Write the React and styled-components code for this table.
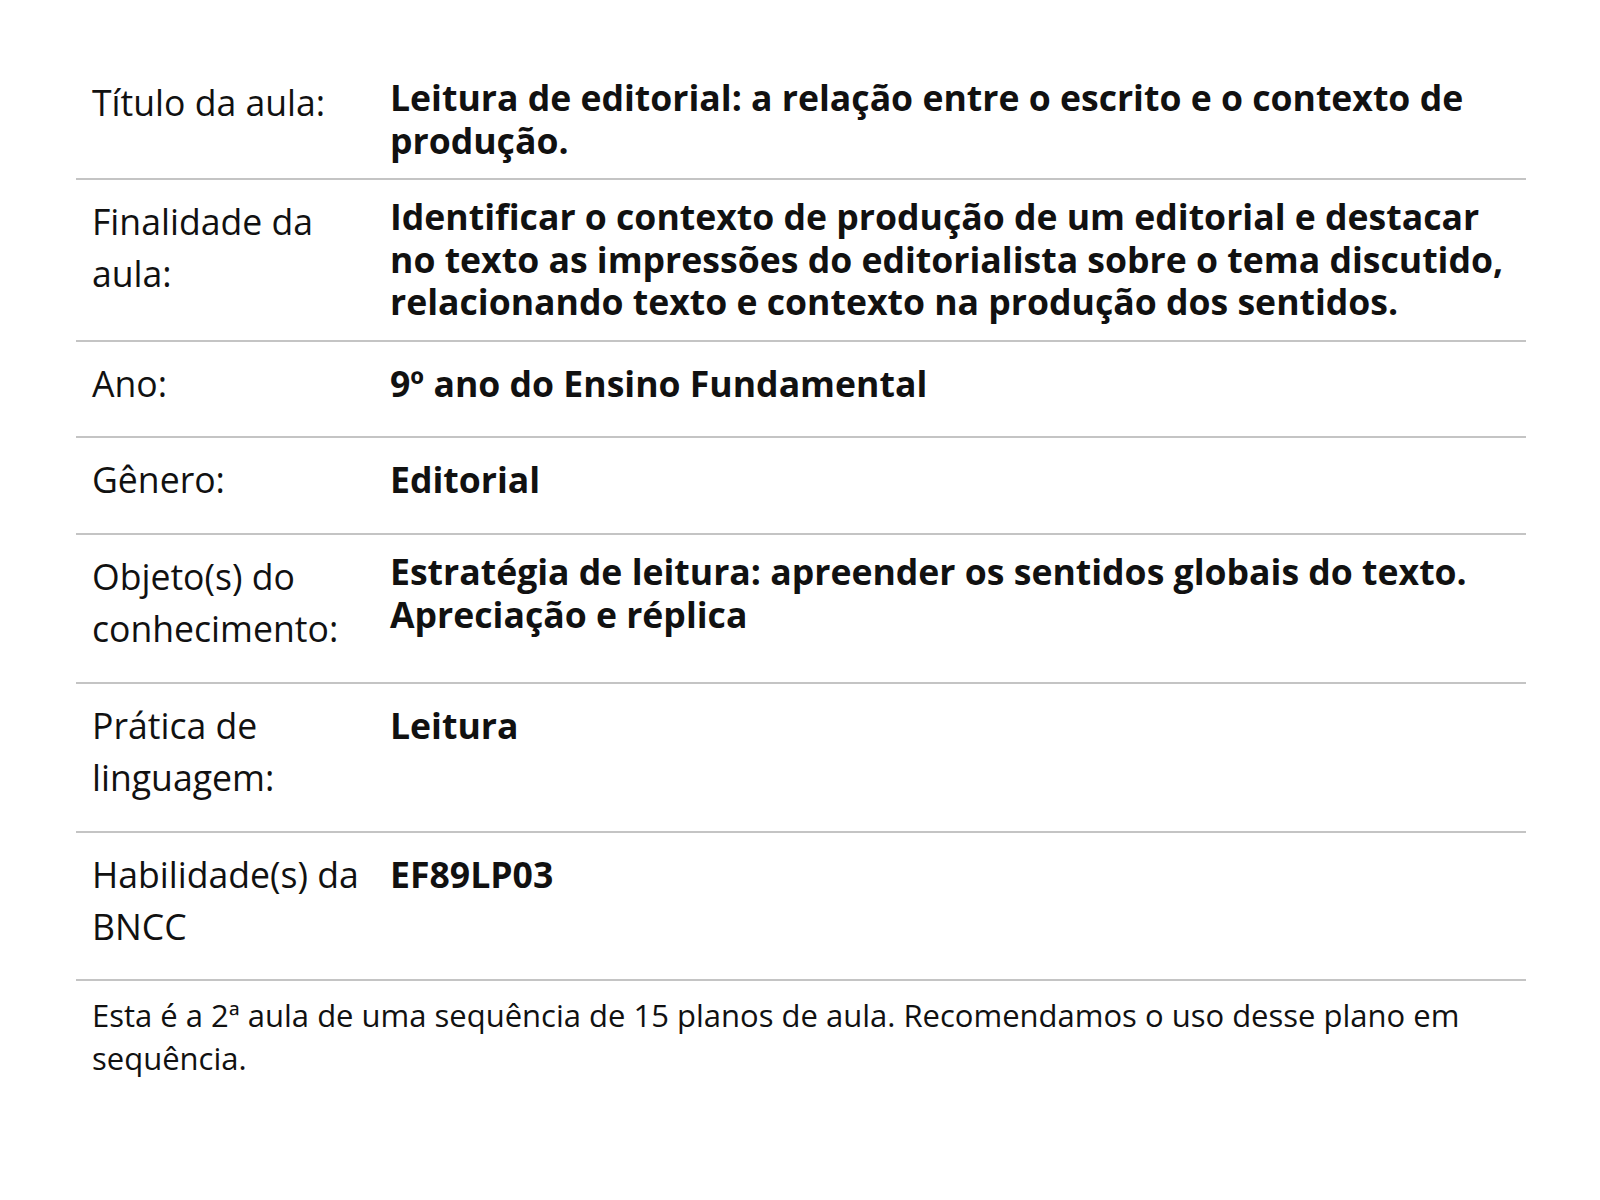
import styled, { createGlobalStyle } from "styled-components";

const GlobalStyle = createGlobalStyle`
  body {
    margin: 0;
    background: #ffffff;
    color: #111111;
    font-family: "Open Sans", "Noto Sans", sans-serif;
  }
`;

const rows = [
  {
    label: "Título da aula:",
    value: "Leitura de editorial: a relação entre o escrito e o contexto de produção.",
    multi: true,
  },
  {
    label: "Finalidade da aula:",
    value:
      "Identificar o contexto de produção de um editorial e destacar no texto as impressões do editorialista sobre o tema discutido, relacionando texto e contexto na produção dos sentidos.",
    multi: true,
  },
  { label: "Ano:", value: "9º ano do Ensino Fundamental" },
  { label: "Gênero:", value: "Editorial" },
  {
    label: "Objeto(s) do conhecimento:",
    value: (
      <>
        Estratégia de leitura: apreender os sentidos globais do texto.
        <br />
        Apreciação e réplica
      </>
    ),
    multi: true,
  },
  { label: "Prática de linguagem:", value: "Leitura" },
  { label: "Habilidade(s) da BNCC", value: "EF89LP03" },
];

// Ficha do plano de aula
const App = () => {
  return (
    <>
      <GlobalStyle />
      <Sheet>
        {rows.map((row, i) => (
          <Row key={i} $first={i === 0}>
            <Label>{row.label}</Label>
            <Value $multi={row.multi}>{row.value}</Value>
          </Row>
        ))}
        <Note>
          Esta é a 2ª aula de uma sequência de 15 planos de aula. Recomendamos o uso desse plano em
          sequência.
        </Note>
      </Sheet>
    </>
  );
};

export default App;

const Sheet = styled.div`
  width: 1450px;
  margin: 61px 0 0 76px;
`;

const Row = styled.div`
  display: grid;
  grid-template-columns: 314px minmax(0, 1fr);
  align-items: start;
  border-top: ${props => (props.$first ? "none" : "2px solid #c4c4c4")};
`;

const Label = styled.div`
  padding: 15px 14px 27.8px 16px;
  font-size: 35.6px;
  line-height: 52px;
  font-weight: 400;
`;

const Value = styled.div`
  padding: 15px 12px ${props => (props.$multi ? "17px" : "27.8px")} 0;
  font-size: 35.6px;
  line-height: ${props => (props.$multi ? "42.5px" : "52px")};
  font-weight: 700;
`;

const Note = styled.p`
  margin: 0;
  border-top: 2px solid #c4c4c4;
  padding: 13px 14px 0 16px;
  font-size: 31px;
  line-height: 43px;
`;
